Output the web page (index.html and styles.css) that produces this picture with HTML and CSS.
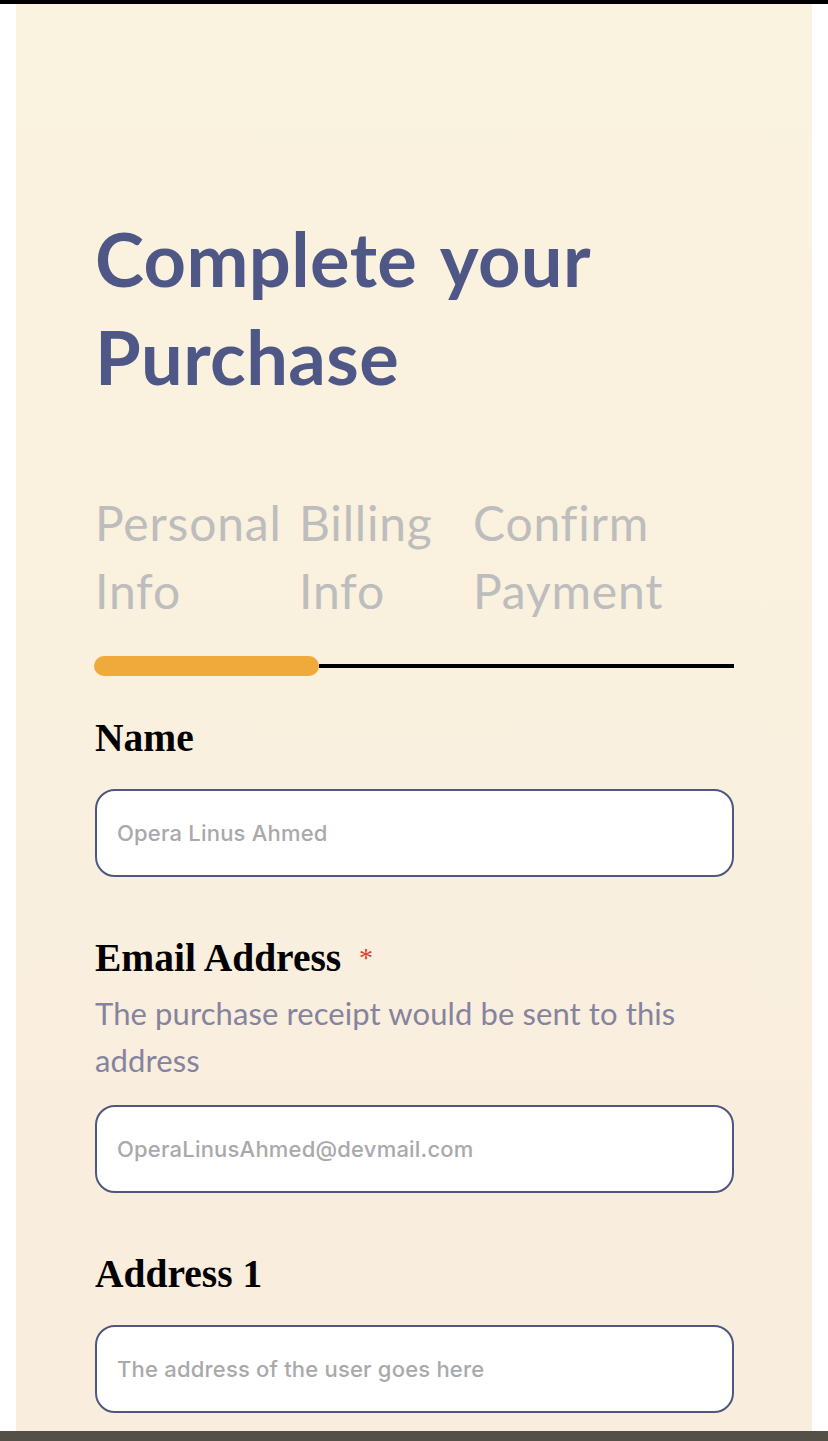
FILE: index.html
```html
<!DOCTYPE html>
<html lang="en">
<head>
<meta charset="utf-8">
<title>Complete your Purchase</title>
<link rel="stylesheet" href="styles.css">
</head>
<body>
<div class="topbar"></div>
<main class="panel">
  <h1 class="title">Complete your Purchase</h1>
  <nav class="steps">
    <div class="step step-1">Personal Info</div>
    <div class="step step-2">Billing Info</div>
    <div class="step step-3">Confirm Payment</div>
  </nav>
  <div class="progress">
    <div class="progress-fill"></div>
    <div class="progress-track"></div>
  </div>
  <form class="form">
    <div class="field">
      <label class="label" for="name">Name</label>
      <input class="input" id="name" type="text" placeholder="Opera Linus Ahmed">
    </div>
    <div class="field">
      <label class="label" for="email">Email Address <span class="req">*</span></label>
      <p class="hint">The purchase receipt would be sent to this address</p>
      <input class="input" id="email" type="email" placeholder="OperaLinusAhmed@devmail.com">
    </div>
    <div class="field">
      <label class="label" for="addr">Address 1</label>
      <input class="input" id="addr" type="text" placeholder="The address of the user goes here">
    </div>
  </form>
</main>
<div class="bottombar"></div>
</body>
</html>
```
FILE: styles.css
```css
html, body {
  margin: 0;
  padding: 0;
}
body {
  height: 1441px;
  display: flex;
  flex-direction: column;
  background: #ffffff;
  overflow: hidden;
}
.topbar {
  height: 4px;
  background: #000000;
  flex: none;
}
.bottombar {
  height: 10px;
  background: #545047;
  flex: none;
}
.panel {
  flex: 1;
  margin: 0 16px;
  padding: 0 78px 0 79px;
  overflow: hidden;
  background: linear-gradient(to bottom, #faf3df 0%, #f9edde 100%);
  box-sizing: border-box;
}
.title {
  margin: 206px 0 0;
  font-family: "Lato", "Open Sans", sans-serif;
  font-weight: 700;
  font-size: 74px;
  line-height: 98px;
  color: #4f5786;
  letter-spacing: 0.4px;
  word-spacing: 6px;
  max-width: 520px;
}
.steps {
  display: flex;
  margin-top: 83px;
  font-family: "Lato", "Open Sans", sans-serif;
  font-size: 48px;
  line-height: 68px;
  letter-spacing: 0.8px;
  color: #bdbdbd;
}
.step-1 { width: 204px; }
.step-2 { width: 174px; }
.step-3 { width: 200px; }
.progress {
  display: flex;
  align-items: center;
  margin-top: 31px;
  height: 20px;
  margin-left: -1px;
}
.progress-fill {
  width: 225px;
  height: 20px;
  border-radius: 10px;
  background: #f0a93b;
  flex: none;
}
.progress-track {
  flex: 1;
  height: 4px;
  background: #000000;
}
.form {
  display: flex;
  flex-direction: column;
  gap: 57px;
  margin-top: 38px;
}
.field {
  display: flex;
  flex-direction: column;
}
.label {
  font-family: "Liberation Serif", "Times New Roman", serif;
  font-weight: 700;
  font-size: 39.5px;
  line-height: 48px;
  color: #000000;
}
.req {
  color: #d9412f;
  font-size: 28px;
  margin-left: 8px;
  vertical-align: top;
  font-weight: 400;
}
.hint {
  margin: 8px 0 0;
  font-family: "Lato", "Open Sans", sans-serif;
  font-size: 31px;
  line-height: 47px;
  letter-spacing: 0.1px;
  color: #86839e;
}
.input {
  margin-top: 27px;
  box-sizing: border-box;
  width: 100%;
  height: 88px;
  border: 2px solid #50577f;
  border-radius: 20px;
  background: #ffffff;
  padding: 0 20px;
  font-family: "Inter", "Roboto", sans-serif;
  font-size: 22px;
  font-weight: 500;
  letter-spacing: 0.2px;
  outline: none;
}
.hint + .input {
  margin-top: 21px;
}
.input::placeholder {
  color: #a9a9ab;
}
```
